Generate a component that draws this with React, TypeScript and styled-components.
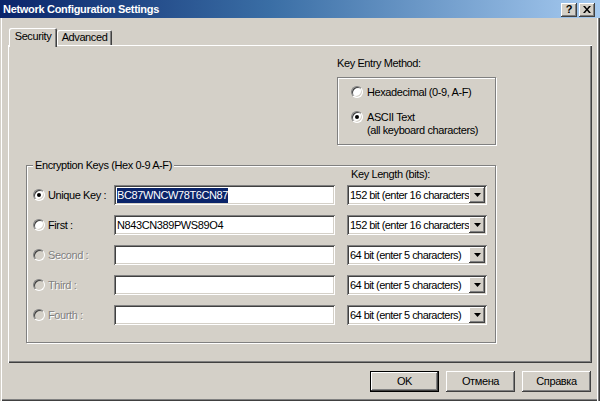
import React from "react";
import styled, { createGlobalStyle, css } from "styled-components";

const Global = createGlobalStyle`
  html, body { margin: 0; padding: 0; background: #d4d0c8; }
  body { font-family: "Liberation Sans", Arial, sans-serif; font-size: 11px; }
  * { box-sizing: border-box; }
`;

const raised = css`
  box-shadow: inset -1px -1px #404040, inset 1px 1px #ffffff,
    inset -2px -2px #808080, inset 2px 2px #d4d0c8;
`;
const sunken = css`
  box-shadow: inset 1px 1px #808080, inset -1px -1px #ffffff,
    inset 2px 2px #404040, inset -2px -2px #d4d0c8;
`;
const etched = css`
  border: 1px solid #808080;
  box-shadow: inset 1px 1px #ffffff, 1px 1px #ffffff;
`;

const Window = styled.div`
  width: 600px;
  height: 401px;
  display: flex;
  flex-direction: column;
  background: #d4d0c8;
  overflow: hidden;
  color: #000;
  font-size: 11px;
  letter-spacing: -0.4px;
  line-height: 13px;
`;

const TitleBar = styled.div`
  height: 18px;
  flex-shrink: 0;
  display: flex;
  align-items: center;
  justify-content: space-between;
  padding: 0 5px 0 3px;
  background: linear-gradient(to right, #0a246a 0%, #3a6ea5 45%, #a6caf0 100%);
  color: #fff;
  font-weight: bold;
  letter-spacing: -0.3px;
`;

const TitleButtons = styled.div`
  display: flex;
  gap: 2px;
  padding-top: 1px;
`;

const CaptionButton = styled.div`
  width: 16px;
  height: 14px;
  background: #d4d0c8;
  ${raised};
  display: flex;
  align-items: center;
  justify-content: center;
  color: #000;
  font-weight: bold;
  font-size: 11px;
  letter-spacing: 0;
  padding-bottom: 1px;
`;

const Body = styled.div`
  flex: 1;
  display: flex;
  flex-direction: column;
  padding: 10px 8px 9px 8px;
  box-shadow: inset 1px 0 #d4d0c8, inset 2px 0 #ffffff, inset -1px 0 #404040,
    inset -2px 0 #808080, inset -3px 0 #ffffff, inset 0 -1px #404040,
    inset 0 -2px #808080;
`;

const TabStrip = styled.div`
  display: flex;
  align-items: flex-end;
  padding-left: 1px;
  position: relative;
  z-index: 1;
`;

const Tab = styled.div<{ $active?: boolean }>`
  display: flex;
  align-items: center;
  justify-content: center;
  background: #d4d0c8;
  border-top-left-radius: 2px;
  border-top-right-radius: 2px;
  box-shadow: inset 1px 1px #ffffff, inset -1px 0 #404040, inset -2px 0 #808080;
  width: ${(p) => (p.$active ? 48 : 55)}px;
  height: ${(p) => (p.$active ? 19 : 15)}px;
  margin-bottom: ${(p) => (p.$active ? -2 : 0)}px;
  padding-bottom: ${(p) => (p.$active ? 2 : 0)}px;
`;

const Panel = styled.div`
  flex: 1;
  display: flex;
  flex-direction: column;
  background: #d4d0c8;
  padding: 12px 96px 0 18px;
  box-shadow: inset 1px 1px #ffffff, inset -1px -1px #404040,
    inset -2px -2px #808080;
`;

const KeyEntry = styled.div`
  align-self: flex-end;
  width: 159px;
  display: flex;
  flex-direction: column;
`;

const SectionLabel = styled.div`
  height: 13px;
  margin-bottom: 7px;
`;

const KeyEntryBox = styled.div`
  ${etched};
  display: flex;
  flex-direction: column;
  gap: 12px;
  padding: 8px 0 7px 13px;
`;

const Option = styled.div`
  display: flex;
  align-items: flex-start;
  gap: 4px;
`;

const OptionText = styled.div`
  display: flex;
  flex-direction: column;
`;

const Radio = styled.span<{ $checked?: boolean; $disabled?: boolean }>`
  position: relative;
  flex-shrink: 0;
  width: 12px;
  height: 12px;
  border-radius: 50%;
  background: ${(p) => (p.$disabled ? "#d4d0c8" : "#ffffff")};
  border: 1px solid;
  border-color: #808080 #ffffff #ffffff #808080;
  box-shadow: inset 1px 1px #404040, inset -1px -1px #d4d0c8;
  &::after {
    content: "";
    display: ${(p) => (p.$checked ? "block" : "none")};
    position: absolute;
    left: 3px;
    top: 3px;
    width: 4px;
    height: 4px;
    border-radius: 50%;
    background: #000;
  }
`;

const Group = styled.div`
  position: relative;
  margin-top: 20px;
  ${etched};
  padding: 2px 8px 17px 6px;
  display: flex;
  flex-direction: column;
  gap: 10px;
`;

const GroupCaption = styled.div`
  position: absolute;
  top: -7px;
  left: 6px;
  padding: 0 2px;
  background: #d4d0c8;
`;

const KeyRow = styled.div<{ $header?: boolean }>`
  display: grid;
  grid-template-columns: 81px 1fr 140px;
  align-items: center;
  height: ${(p) => (p.$header ? 13 : 20)}px;
  margin-bottom: ${(p) => (p.$header ? -6 : 0)}px;
`;

const HeaderLabel = styled.div`
  grid-column: 3;
  padding-left: 4px;
`;

const RowLabel = styled.div<{ $disabled?: boolean }>`
  display: flex;
  align-items: center;
  gap: 3px;
  color: ${(p) => (p.$disabled ? "#808080" : "#000")};
  text-shadow: ${(p) => (p.$disabled ? "1px 1px 0 #ffffff" : "none")};
`;

const TextBox = styled.div`
  width: 221px;
  height: 20px;
  background: #fff;
  ${sunken};
  display: flex;
  align-items: center;
  padding: 0 3px;
  overflow: hidden;
  white-space: nowrap;
`;

const Selection = styled.span`
  background: #0a246a;
  color: #fff;
  padding: 1px 0;
`;

const Combo = styled.div`
  height: 20px;
  background: #fff;
  ${sunken};
  display: flex;
  align-items: center;
  padding: 2px 2px 2px 3px;
`;

const ComboText = styled.div`
  flex: 1;
  min-width: 0;
  overflow: hidden;
  white-space: nowrap;
  letter-spacing: -0.55px;
`;

const DropButton = styled.div`
  width: 16px;
  height: 16px;
  flex-shrink: 0;
  background: #d4d0c8;
  ${raised};
  display: flex;
  align-items: center;
  justify-content: center;
`;

const ButtonRow = styled.div`
  display: flex;
  justify-content: flex-end;
  gap: 7px;
  margin-top: 8px;
  padding-right: 1px;
`;

const Button = styled.div<{ $default?: boolean }>`
  width: 69px;
  height: 21px;
  display: flex;
  align-items: center;
  justify-content: center;
  background: #d4d0c8;
  ${(p) =>
    p.$default
      ? css`
          border: 1px solid #000;
          box-shadow: inset -1px -1px #404040, inset 1px 1px #ffffff,
            inset -2px -2px #808080;
        `
      : raised};
`;

const Arrow = () => (
  <svg width="7" height="4" viewBox="0 0 7 4">
    <path d="M0 0h7L3.5 4z" fill="#000" />
  </svg>
);

const CloseGlyph = () => (
  <svg width="8" height="7" viewBox="0 0 8 7">
    <path d="M0 0h2l2 2.5L6 0h2L5 3.5 8 7H6L4 4.5 2 7H0l3-3.5z" fill="#000" />
  </svg>
);

type Row = {
  label: string;
  value?: string;
  selected?: boolean;
  checked?: boolean;
  disabled?: boolean;
  length: string;
};

const rows: Row[] = [
  { label: "Unique Key :", value: "BC87WNCW78T6CN87", selected: true, checked: true, length: "152 bit (enter 16 characters)" },
  { label: "First :", value: "N843CN389PWS89O4", length: "152 bit (enter 16 characters)" },
  { label: "Second :", disabled: true, length: "64 bit (enter 5 characters)" },
  { label: "Third :", disabled: true, length: "64 bit (enter 5 characters)" },
  { label: "Fourth :", disabled: true, length: "64 bit (enter 5 characters)" },
];

export default function App() {
  return (
    <>
      <Global />
      <Window>
        <TitleBar>
          <span>Network Configuration Settings</span>
          <TitleButtons>
            <CaptionButton>?</CaptionButton>
            <CaptionButton>
              <CloseGlyph />
            </CaptionButton>
          </TitleButtons>
        </TitleBar>
        <Body>
          <TabStrip>
            <Tab $active>Security</Tab>
            <Tab>Advanced</Tab>
          </TabStrip>
          <Panel>
            <KeyEntry>
              <SectionLabel>Key Entry Method:</SectionLabel>
              <KeyEntryBox>
                <Option>
                  <Radio />
                  <OptionText>Hexadecimal (0-9, A-F)</OptionText>
                </Option>
                <Option>
                  <Radio $checked />
                  <OptionText>
                    <span>ASCII Text</span>
                    <span>(all keyboard characters)</span>
                  </OptionText>
                </Option>
              </KeyEntryBox>
            </KeyEntry>
            <Group>
              <GroupCaption>Encryption Keys (Hex 0-9 A-F)</GroupCaption>
              <KeyRow $header>
                <HeaderLabel>Key Length (bits):</HeaderLabel>
              </KeyRow>
              {rows.map((r) => (
                <KeyRow key={r.label}>
                  <RowLabel $disabled={r.disabled}>
                    <Radio $checked={r.checked} $disabled={r.disabled} />
                    <span>{r.label}</span>
                  </RowLabel>
                  <TextBox>
                    {r.selected ? <Selection>{r.value}</Selection> : r.value}
                  </TextBox>
                  <Combo>
                    <ComboText>{r.length}</ComboText>
                    <DropButton>
                      <Arrow />
                    </DropButton>
                  </Combo>
                </KeyRow>
              ))}
            </Group>
          </Panel>
          <ButtonRow>
            <Button $default>OK</Button>
            <Button>Отмена</Button>
            <Button>Справка</Button>
          </ButtonRow>
        </Body>
      </Window>
    </>
  );
}
